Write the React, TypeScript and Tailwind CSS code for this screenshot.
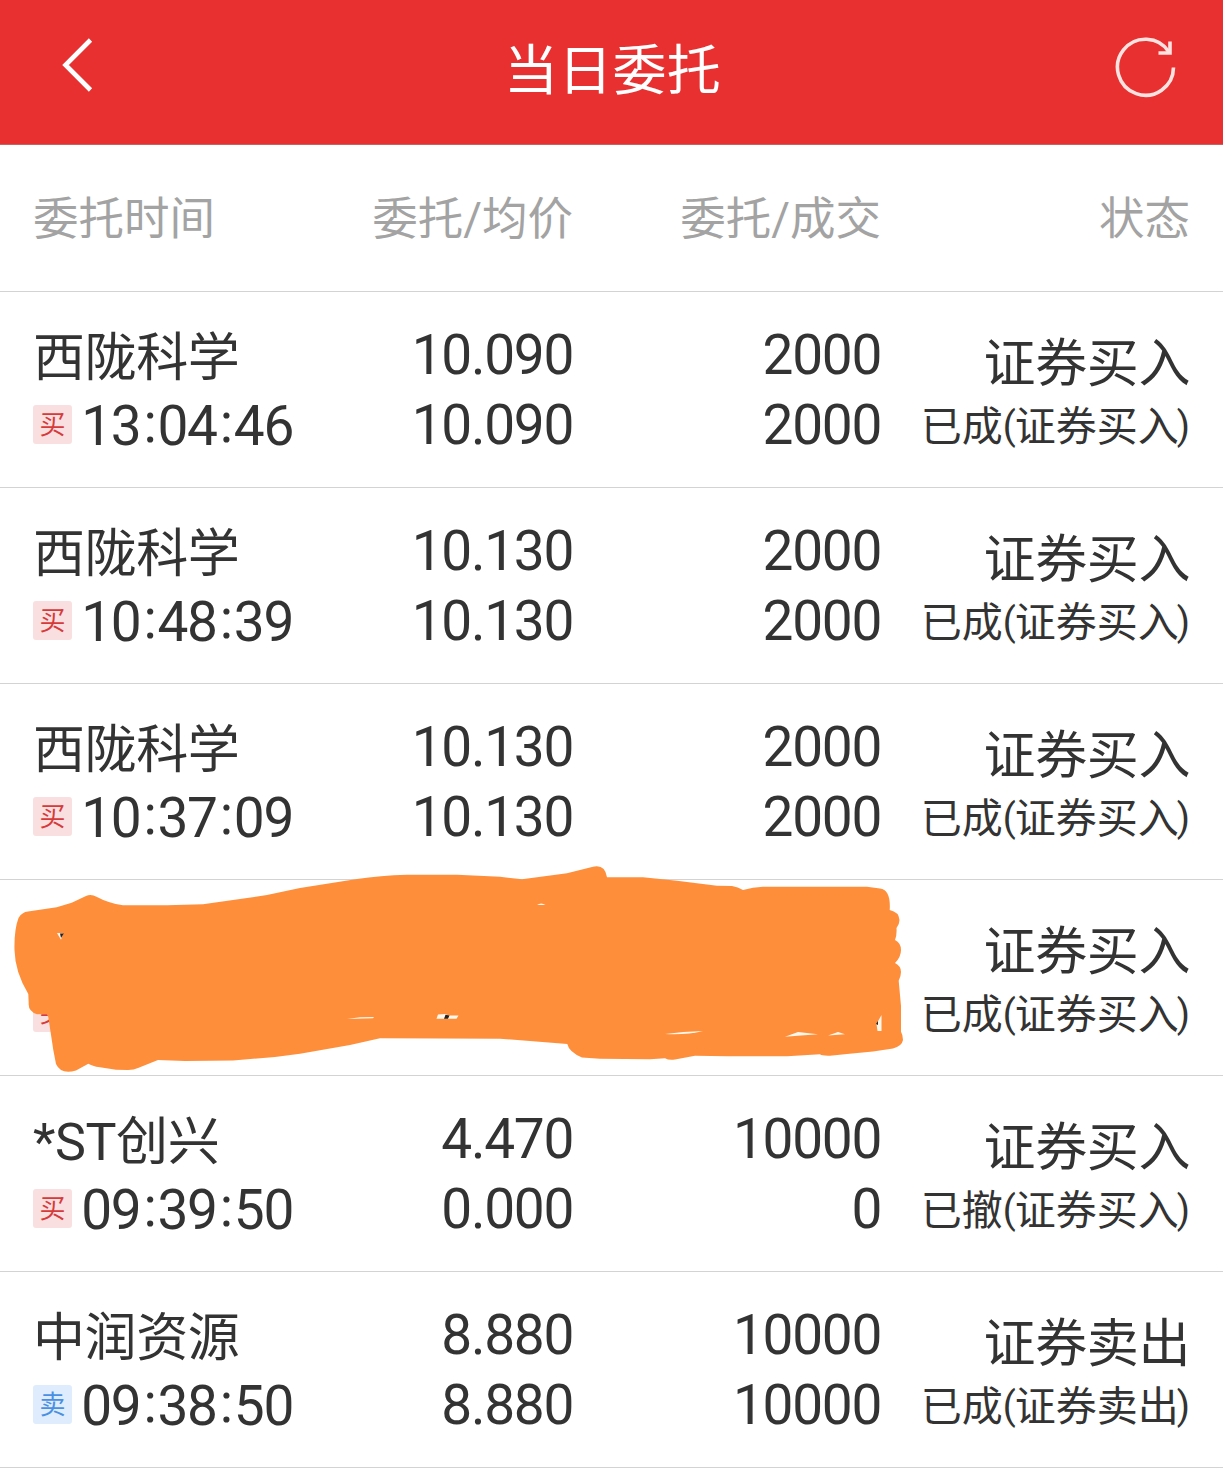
import { Fragment } from 'react'

type Order = {
  name?: string
  time?: string
  side: 'buy' | 'sell'
  price?: [string, string]
  amount?: [string, string]
  result: string
  redacted?: boolean
}

const orders: Order[] = [
  { name: '西陇科学', time: '13:04:46', side: 'buy', price: ['10.090', '10.090'], amount: ['2000', '2000'], result: '已成' },
  { name: '西陇科学', time: '10:48:39', side: 'buy', price: ['10.130', '10.130'], amount: ['2000', '2000'], result: '已成' },
  { name: '西陇科学', time: '10:37:09', side: 'buy', price: ['10.130', '10.130'], amount: ['2000', '2000'], result: '已成' },
  { side: 'buy', result: '已成', redacted: true },
  { name: '*ST创兴', time: '09:39:50', side: 'buy', price: ['4.470', '0.000'], amount: ['10000', '0'], result: '已撤' },
  { name: '中润资源', time: '09:38:50', side: 'sell', price: ['8.880', '8.880'], amount: ['10000', '10000'], result: '已成' },
]

function TopBar() {
  return (
    <header className="grid h-[145px] grid-cols-[1fr_auto_1fr] items-center border-b border-[#c6625f] bg-[#e83030] pr-[44px] pl-[46px] text-white">
      <svg className="-mt-[15px] ml-[10px] h-[60px] w-[66px]" viewBox="0 0 66 60" fill="none" stroke="currentColor" strokeWidth="4.6">
        <path d="M34.5 5 9.500 30l25 25" strokeLinejoin="miter" />
      </svg>
      <h1 className="-mt-[10px] text-[54px] leading-[80px] tracking-[0.2px]">当日委托</h1>
      <svg className="-mt-[11px] h-[66px] w-[66px] justify-self-end" viewBox="0 0 66 66" fill="none" stroke="#ffe3e1" strokeWidth="3.6">
        <path d="M60.500 33.500A28 28 0 1 1 56 18" />
        <path d="M45.500 19H57V7.500" />
      </svg>
    </header>
  )
}

function Scribble() {
  return (
    <svg className="absolute -top-[20px] left-0 h-[230px] w-[1223px]" viewBox="0 860 1223 230">
      <path
        fill="#ff8e3a"
        d="M28 911.500L56.700 907.300L71.700 902.700L86 896Q91 893.500 97 897Q108 903 123 905.300L167 905.300L203 904.300L240 899L267 895L300 888L357 879Q380 875.500 407 874.700L457 874.700L500 876.700L522 879.300L567 873.300L592 867Q605 863.500 607 877.300L643 877.300L677 880.700L717 885.700L732 886Q738 887 743 890Q753 887 763 886.700L867 886.700L880 888.500Q891 890 889.700 910Q899 912 899.500 920Q899.500 924 896.500 928Q897 935 895 940Q901 943 901 950Q901 957 895 963Q901 966 901 972Q901 976 898.700 980.700L901 1006L901 1031.700Q903 1035 903 1040Q902 1046 893 1048.500L873 1051.500L847 1054L830 1055.700Q822 1056 820 1054.300L787 1056.300L727 1056.300L695 1055.700L675 1059.500Q669 1060.500 665 1058.300L650 1059.300L600 1058.700L582 1057.500Q569 1052 567.300 1044L533 1041.300L500 1038.700L380 1038.300L350 1045L300 1053.700L275 1057L233 1060.500L185 1061L158 1060L138 1068Q134 1070 128 1070L116 1069.800L100 1067.300Q92 1066 88.300 1063.700L76 1070.500Q61 1075 56 1064L53.300 1050L48.300 1017L46.700 1014L37 1014.300Q28 1011 28.700 1003L28.300 994Q15 972 14.500 950Q14 930 18.500 918Q22 912 28 911.500Z"
      />
      <g fill="#fff7ec">
        <path d="M57 933l6 .3-2 6.500z" />
        <path d="M537 905q4-3 8.500 0z" />
        <path d="M347 1019l13-1.700 14-.300-1 1.300z" />
        <path d="M438 1014.500l7-.5 4 1.500h9.500l-2 3.200H436.500z" />
        <path d="M665 1034q18-2.500 38-3-16 4-38 3z" />
        <path d="M785 1036.800l13-4.800 20 2.300-17 1.200z" />
        <path d="M828 1035.500l10-3.500 7 2.300z" />
        <path d="M881.500 1015v16h-4l-1-7z" />
      </g>
      <path fill="#222" d="M60 933.500h3.800l-2.800 4.500zM444 1018.800l1.500-4 4 .700-1.500 3.300zM876 1024l2-3v4z" />
    </svg>
  )
}

function OrderTime({ time }: { time: string }) {
  return (
    <span className="pt-[2px]">
      {time.split(':').map((part, index) => (
        <Fragment key={index}>
          {index > 0 && <span className="relative -top-[3px] mr-[2px] ml-[3px]">:</span>}
          {part}
        </Fragment>
      ))}
    </span>
  )
}

function OrderRow({ order }: { order: Order }) {
  const action = order.side === 'buy' ? '证券买入' : '证券卖出'

  return (
    <li className="relative grid h-[196px] grid-cols-[300px_240px_308px_309px] border-b border-[#d3d3d3] pt-[28px] pl-[33px] font-[Roboto,'Noto_Sans_CJK_SC',sans-serif] text-[55px] leading-[70px] tracking-[-1.3px] whitespace-nowrap text-[#333]">
      <div>
        <div className="h-[70px] pt-[4px] text-[52px] tracking-[-0.4px]">{order.name}</div>
        <div className="flex h-[70px] w-[260px] items-center justify-between">
          <span
            className={
              order.side === 'buy'
                ? '-mt-px flex h-[39px] w-[39px] items-center justify-center rounded-[3px] bg-[#fadfe0] text-[26px] leading-[39px] tracking-normal text-[#d63b3b]'
                : '-mt-px flex h-[39px] w-[39px] items-center justify-center rounded-[3px] bg-[#dfecfd] text-[26px] leading-[39px] tracking-normal text-[#4a90e2]'
            }
          >
            <span className="pt-[2px]">{order.side === 'buy' ? '买' : '卖'}</span>
          </span>
          {order.time && <OrderTime time={order.time} />}
        </div>
      </div>
      <div className="text-right">
        {order.price?.map((value, index) => <div key={index}>{value}</div>)}
      </div>
      <div className="text-right">
        {order.amount?.map((value, index) => <div key={index}>{value}</div>)}
      </div>
      <div className="text-right">
        <div className="h-[70px] pt-[10px] text-[52px] tracking-[-0.4px]">{action}</div>
        <div className="h-[70px] pt-[2px] text-[41px] tracking-normal">
          {order.result}
          <span className="relative -top-[2px] -mr-[1px] text-[38px]">(</span>
          {action}
          <span className="relative -top-[2px] -ml-[2px] text-[38px]">)</span>
        </div>
      </div>
      {order.redacted && <Scribble />}
    </li>
  )
}

function App() {
  return (
    <main className="h-[1481px] w-[1223px] overflow-hidden bg-white font-['Noto_Sans_CJK_SC',sans-serif]">
      <TopBar />
      <div className="grid h-[147px] grid-cols-[300px_240px_308px_309px] items-center border-b border-[#d3d3d3] pt-[5px] pl-[33px] font-[Roboto,'Noto_Sans_CJK_SC',sans-serif] text-[45.500px] text-[#a3a3a3]">
        <span>委托时间</span>
        <span className="text-right">委托/均价</span>
        <span className="text-right">委托/成交</span>
        <span className="text-right">状态</span>
      </div>
      <ul>
        {orders.map((order, index) => (
          <OrderRow key={index} order={order} />
        ))}
      </ul>
    </main>
  )
}

export default App
